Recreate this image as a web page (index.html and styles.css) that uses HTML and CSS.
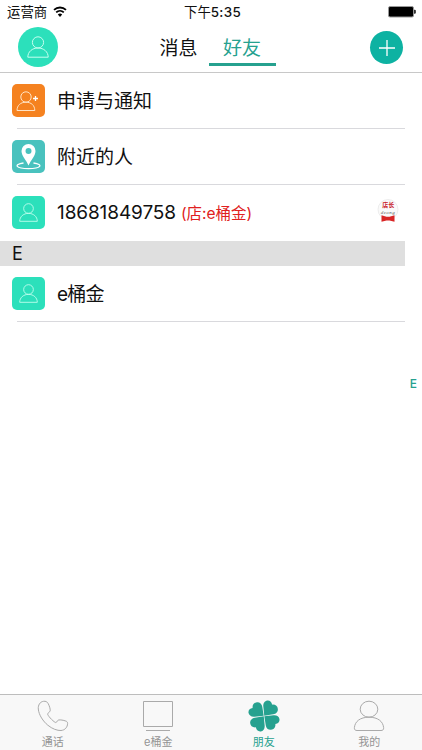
FILE: index.html
```html
<!DOCTYPE html>
<html lang="zh-CN">

<head>
    <meta charset="UTF-8">
    <meta name="viewport" content="width=device-width, initial-scale=1.0">
    <title>好友</title>
    <link rel="stylesheet" href="styles.css">
</head>

<body>
    <!-- shared line icon -->
    <svg class="sprite" width="0" height="0">
        <symbol id="person" viewBox="0 0 22 22">
            <circle cx="11" cy="6.4" r="5.6" />
            <path d="M.8 21.2C.8 15.8 5.2 12 11 12s10.200 3.800 10.200 9.200z" />
        </symbol>
    </svg>

    <div class="app">
        <div class="status">
            <div class="carrier">
                <span>运营商</span>
                <svg class="wifi" width="14" height="11" viewBox="0 0 14 11">
                    <path d="M1 3.900a8.700 8.700 0 0 1 12 0M3.200 6.300a5.500 5.500 0 0 1 7.600 0" />
                    <path class="dot" d="M7 10.900L4.800 8.500a3.200 3.200 0 0 1 4.400 0z" />
                </svg>
            </div>
            <div class="time">下午<b>5:35</b></div>
            <div class="power">
                <svg width="28" height="12" viewBox="0 0 28 12">
                    <rect x=".5" y=".5" width="25" height="10.500" rx="1.500" fill="#000" stroke="#999" />
                    <path d="M26.200 3.800h.5q1 0 1 1v2q0 1-1 1h-.5z" />
                </svg>
            </div>
        </div>

        <header class="nav">
            <a class="avatar"><svg class="line"><use href="#person" /></svg></a>
            <div class="switch">
                <a class="switch-item">消息</a>
                <a class="switch-item active">好友</a>
            </div>
            <a class="add">
                <svg width="18" height="18" viewBox="0 0 18 18"><path d="M9 1v16M1 9h16" /></svg>
            </a>
        </header>

        <main class="list">
            <div class="row">
                <span class="icon orange">
                    <svg width="33" height="33" viewBox="0 0 33 33">
                        <circle cx="14" cy="13" r="5.200" />
                        <path d="M5 26.500c0-5 3.500-8.300 8.900-8.300s8.900 3.300 8.900 8.300z" />
                        <path class="plus" d="M23.500 12v5M21 14.500h5" />
                    </svg>
                </span>
                <span class="name">申请与通知</span>
            </div>
            <div class="row">
                <span class="icon teal">
                    <svg width="33" height="33" viewBox="0 0 33 33">
                        <path class="solid" fill-rule="evenodd" d="M16.500 25.500C14.500 20.500 9.500 16 9.500 11a7 7 0 0 1 14 0c0 5-5 9.500-7 14.500zM16.500 8a3 3 0 1 0 0 6 3 3 0 0 0 0-6z" />
                        <path class="ring" d="M11.500 23C1 24.500 4 28.600 16.500 28.600S32 24.500 21.500 23" />
                    </svg>
                </span>
                <span class="name">附近的人</span>
            </div>
            <div class="row last">
                <span class="icon mint"><svg class="line"><use href="#person" /></svg></span>
                <span class="name number">18681849758</span>
                <span class="shop">(店:e桶金)</span>
                <svg class="manager" width="24" height="26" viewBox="0 0 24 26">
                    <circle cx="12" cy="10.500" r="10" />
                    <text class="title" x="12.300" y="7.700">店长</text>
                    <text class="sub" x="12" y="14.500">dzong</text>
                    <path d="M5.500 16.300l5 1.500h3l5-1.500v6.500l-5-1.300h-3l-5 1.300z" />
                </svg>
            </div>
            <div class="section">E</div>
            <div class="row">
                <span class="icon mint"><svg class="line"><use href="#person" /></svg></span>
                <span class="name mixed">e桶金</span>
            </div>
            <a class="index">E</a>
        </main>

        <footer class="tabs">
            <a class="tab">
                <svg width="32" height="32" viewBox="0 0 32 32">
                    <path d="M6.500 1.300C3 1.800 1 5 1.300 9c.5 6 5 12.500 9.500 16.200 4.500 3.700 9.500 5.500 13.200 5.300 4-.3 6.500-3.300 6.600-7 0-1.400-.6-2-1.700-2.400-2.700-1-5.400-1.400-7.300-1.100-1.400.3-1.200 2-2.700 2.500-1.300.3-7.500-5.800-8.200-8.200-.4-1.500 2.200-2 2.500-3.500.2-2-.8-5-2.200-7.500-.8-1.500-2.300-2.300-4.500-2z" />
                </svg>
                <span>通话</span>
            </a>
            <a class="tab">
                <svg width="32" height="32" viewBox="0 0 32 32">
                    <path d="M1.500 1.500h29v25h-29zM4 30.500h24" />
                </svg>
                <span>e桶金</span>
            </a>
            <a class="tab active">
                <svg width="32" height="32" viewBox="0 0 32 32">
                    <g transform="rotate(-7 16 16)">
                        <path id="leaf" d="M15.700 15.700L6.500 15.500C3.300 15.400 1 13.500 1 10.900c0-2.700 2-4.300 4.700-4.300C5.700 3.300 7.900 1.300 10.700 1.400c2.800.1 4.600 2.300 4.700 5.300z" />
                        <use href="#leaf" transform="rotate(90 16 16)" />
                        <use href="#leaf" transform="rotate(180 16 16)" />
                        <use href="#leaf" transform="rotate(270 16 16)" />
                    </g>
                </svg>
                <span>朋友</span>
            </a>
            <a class="tab">
                <svg width="32" height="32" viewBox="0 0 32 32">
                    <ellipse cx="16" cy="9.200" rx="8.800" ry="8" />
                    <path d="M4 30.500c-2 0-2.800-1-2.600-3C2 21.500 7 17.200 16 17.200s14 4.300 14.600 10.300c.2 2-.6 3-2.600 3z" />
                </svg>
                <span>我的</span>
            </a>
        </footer>
    </div>
</body>

</html>
```

FILE: styles.css
```css
* {
    box-sizing: border-box;
}

body {
    margin: 0;
    background: #fff;
    color: #111;
    font-family: Inter, "Noto Sans CJK SC", sans-serif;
}

svg {
    display: block;
    flex: none;
}

.sprite {
    position: absolute;
}

.app {
    display: flex;
    flex-direction: column;
    height: 750px;
    overflow: hidden;
}

/* status bar */
.status {
    display: grid;
    grid-template-columns: 1fr auto 1fr;
    align-items: center;
    height: 23px;
    padding: 0 6px 0 7px;
    font-size: 13.4px;
    line-height: 22px;
}

.carrier {
    display: flex;
    align-items: center;
    gap: 6px;
}

.wifi {
    fill: none;
    stroke: #000;
    stroke-width: 1.8;
}

.wifi .dot {
    fill: #000;
    stroke: none;
}

.time {
    padding-left: 2px;
}

.time b {
    font-weight: 500;
    letter-spacing: 0.3px;
}

.power {
    justify-self: end;
}

/* top navigation */
.nav {
    display: flex;
    align-items: flex-start;
    justify-content: space-between;
    height: 50px;
    padding: 4px 19px 0 18px;
    border-bottom: 1px solid #c8c8c8;
}

.avatar,
.add {
    display: flex;
    align-items: center;
    justify-content: center;
    border-radius: 50%;
}

.avatar {
    width: 40px;
    height: 40px;
    background: #2ce0bb;
}

.line {
    width: 19px;
    height: 19px;
    fill: none;
    stroke: #c5fff0;
    stroke-width: 1;
}

.avatar .line {
    width: 22px;
    height: 22px;
}

.add {
    width: 33px;
    height: 33px;
    margin-top: 4px;
    background: #0db2a2;
}

.add path {
    stroke: #fff;
    stroke-width: 1.3;
}

.switch {
    display: flex;
    padding-right: 4px;
}

.switch-item {
    width: 67px;
    height: 39px;
    padding-top: 1px;
    font-size: 19px;
    line-height: 41px;
    text-align: center;
}

.switch-item:first-child {
    width: 60px;
}

.switch-item.active {
    color: #26a18f;
    border-bottom: 3px solid #26a18f;
}

/* contacts */
.list {
    position: relative;
    flex: 1;
}

.row {
    position: relative;
    display: flex;
    align-items: center;
    height: 56px;
    padding: 0 22px 2px 12px;
}

.row::after {
    content: "";
    position: absolute;
    left: 17px;
    right: 17px;
    bottom: 0;
    height: 1px;
    background: #d9d9dd;
}

.row.last::after {
    display: none;
}

.icon {
    display: flex;
    align-items: center;
    justify-content: center;
    width: 33px;
    height: 33px;
    margin-right: 12px;
    border-radius: 5px;
}

.orange {
    background: #f58220;
}

.teal {
    background: #49c2be;
}

.mint {
    background: #2ce0bb;
}

.orange svg {
    fill: none;
    stroke: #ffe3c4;
    stroke-width: 1;
}

.orange .plus {
    stroke: #fff;
    stroke-width: 1.3;
}

.solid {
    fill: #fff;
}

.ring {
    fill: none;
    stroke: #fff;
    stroke-width: 1.3;
}

.name {
    padding-top: 3px;
    font-size: 19px;
    line-height: 30px;
}

.number {
    padding-top: 2px;
    letter-spacing: -0.1px;
}

.mixed {
    letter-spacing: -0.8px;
}

.shop {
    margin-left: 5px;
    color: #e02020;
    font-size: 15.5px;
}

.manager {
    margin-left: auto;
}

.manager circle {
    fill: #fafafa;
    stroke: #ddd;
    stroke-width: .5;
}

.manager text {
    text-anchor: middle;
}

.manager .title {
    fill: #c8202a;
    font: bold 6px "Noto Sans CJK SC", sans-serif;
}

.manager .sub {
    fill: #555;
    font: italic 5px "Liberation Serif", serif;
    letter-spacing: .5px;
}

.manager path {
    fill: #d92525;
}

.section {
    width: 405px;
    height: 25px;
    padding-left: 12px;
    background: #dfdfdf;
    font-size: 18px;
    line-height: 25px;
}

.index {
    position: absolute;
    top: 304px;
    right: 5px;
    color: #26a18f;
    font-size: 12px;
    font-weight: 500;
    line-height: 14px;
}

/* tab bar */
.tabs {
    display: flex;
    height: 56px;
    border-top: 1px solid #bdbdbd;
    background: #f8f8f8;
}

.tab {
    display: flex;
    flex: 1;
    flex-direction: column;
    align-items: center;
    padding-top: 5px;
    color: #949494;
    font-size: 11px;
    line-height: 20px;
}

.tab svg {
    fill: none;
    stroke: #aaa;
    stroke-width: 1;
}

.tab.active {
    color: #26a18f;
}

.tab.active svg {
    fill: #26a18f;
    stroke: none;
}
```
